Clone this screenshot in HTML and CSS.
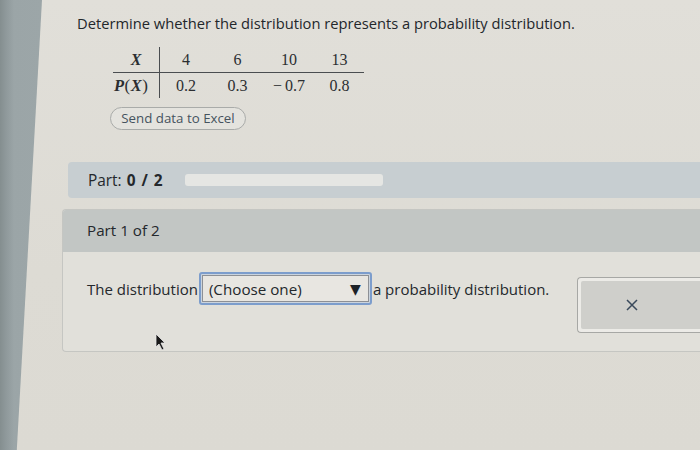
FILE: index.html
```html
<!DOCTYPE html>
<html>
<head>
<meta charset="utf-8">
<link rel="stylesheet" href="styles.css">
</head>
<body>
<div class="screen">
  <div class="strip"></div>
  <div class="main">
    <p class="title">Determine whether the distribution represents a probability distribution.</p>
    <table class="dist">
      <tr class="r1">
        <th class="hd"><i><b>X</b></i></th>
        <td class="c1">4</td><td class="c2">6</td><td class="c3">10</td><td class="c4">13</td>
      </tr>
      <tr class="r2">
        <th class="hd"><i><b>P</b></i><span class="par">(</span><i><b>X</b></i><span class="par">)</span></th>
        <td>0.2</td><td>0.3</td><td>&minus;&thinsp;0.7</td><td>0.8</td>
      </tr>
    </table>
    <div class="btn">Send data to Excel</div>
    <div class="partbar">
      <span class="partlabel">Part: <b>0 / 2</b></span>
      <span class="progress"></span>
    </div>
    <div class="panel">
      <div class="panelhead">Part 1 of 2</div>
      <div class="panelbody">
        <div class="sentence">
          <span>The distribution</span>
          <span class="select"><span class="selinner"><span>(Choose one)</span><span class="tri">&#9660;</span></span></span>
          <span>a probability distribution.</span>
        </div>
        <div class="xbox"><span class="xinner"><svg width="12" height="12" viewBox="0 0 12 12"><path d="M1 1 L11 11 M11 1 L1 11" stroke="#3a4a5c" stroke-width="1.5" fill="none"/></svg></span></div>
      </div>
    </div>
  </div>
  <svg class="cursor" width="12" height="18" viewBox="0 0 12 18"><path d="M1 1 L1 14 L4 11 L7 17 L9 16 L6 10 L10 10 Z" fill="#1a1a1a" stroke="#e8e8e8" stroke-width="0.8"/></svg>
</div>
</body>
</html>
```
FILE: styles.css
```css
html, body { margin: 0; padding: 0; }
body { background: #dedcd5; font-family: "Open Sans", "DejaVu Sans", sans-serif; color: #2b2f33; }
.screen { position: relative; width: 700px; height: 450px; overflow: hidden; display: flex; background: linear-gradient(180deg, #e1dfd9 0%, #dddbd4 60%, #dcdad3 100%); }
.strip { flex: 0 0 42px; height: 450px; background: linear-gradient(90deg, #848e8f 0px, #8f999b 6px, #9ba5a7 14px, #9ca6a8 100%); clip-path: polygon(0 0, 100% 0, 40% 100%, 0 100%); }
.main { flex: 1; min-width: 0; margin-left: -42px; display: flex; flex-direction: column; align-items: flex-start; }
.title { margin: 13px 0 0 77px; font-size: 14.7px; line-height: 20px; color: #23272b; white-space: nowrap; }
.dist { margin: 14px 0 0 113px; border-collapse: collapse; font-family: "Liberation Serif", "DejaVu Serif", serif; font-size: 16px; color: #2b2e31; }
.dist th, .dist td { padding: 0; text-align: center; height: 25px; font-weight: normal; white-space: nowrap; }
.dist th.hd { width: 45px; border-right: 1px solid #4a4d50; }
.dist .r2 th.hd { text-align: left; padding-left: 1px; font-size: 16.5px; }
.dist .par { padding: 0 0.5px; font-size: 17px; }
.dist th b { font-weight: bold; }
.dist .r1 th, .dist .r1 td { border-bottom: 1px solid #4a4d50; }
.dist td.c1 { width: 52px; }
.dist td.c2 { width: 51px; }
.dist td.c3 { width: 52px; }
.dist td.c4 { width: 49px; }
.btn { margin: 9px 0 0 110px; width: 134px; height: 21px; border: 1px solid #a9aba9; border-radius: 12px; background: #e4e3de; font-size: 13.3px; line-height: 21px; text-align: center; color: #46535e; white-space: nowrap; }
.partbar { align-self: stretch; margin: 32px 0 0 68px; height: 36px; background: #c7ced1; border-radius: 4px 0 0 4px; display: flex; align-items: center; }
.partlabel { margin-left: 20px; font-size: 15.4px; color: #24282c; width: 97px; white-space: nowrap; word-spacing: 1px; }
.partlabel b { font-weight: 700; word-spacing: 2px; }
.progress { width: 198px; height: 12px; background: #e5e6e3; border-radius: 3px; }
.panel { align-self: stretch; margin: 11px 0 0 62px; height: 141px; border: 1px solid #c5c6c2; border-right: none; border-radius: 4px 0 0 4px; background: #e1e0da; display: flex; flex-direction: column; overflow: hidden; }
.panelhead { height: 42px; background: #c2c6c4; font-size: 15.2px; line-height: 40px; padding-left: 24px; color: #24282c; }
.panelbody { flex: 1; display: flex; align-items: flex-start; padding-left: 24px; }
.sentence { flex-shrink: 0; margin-top: 20px; display: flex; align-items: center; font-size: 15px; color: #24282c; white-space: nowrap; }
.select { margin: 0 1px 0 1px; display: inline-block; border: 2px solid #7c9dcc; border-radius: 3px; padding: 1px; background: #cbd4de; }
.selinner { display: flex; align-items: center; justify-content: space-between; height: 27px; border: 1px solid #8d9095; background: #e8e6e1; padding: 0 7px 0 6px; box-sizing: border-box; width: 167px; font-size: 15.2px; }
.tri { font-size: 14px; color: #1d2227; }
.xbox { flex-shrink: 0; margin: 25px 0 0 28px; width: 130px; height: 56px; border: 1px solid #a7a8a5; border-right: none; border-radius: 4px 0 0 4px; background: #ecebe7; padding: 3px 0 3px 3px; box-sizing: border-box; }
.xinner { display: flex; align-items: center; height: 100%; background: #cfcfcb; border-radius: 2px; padding-left: 45px; }
.cursor { position: absolute; left: 155px; top: 333px; }
```
